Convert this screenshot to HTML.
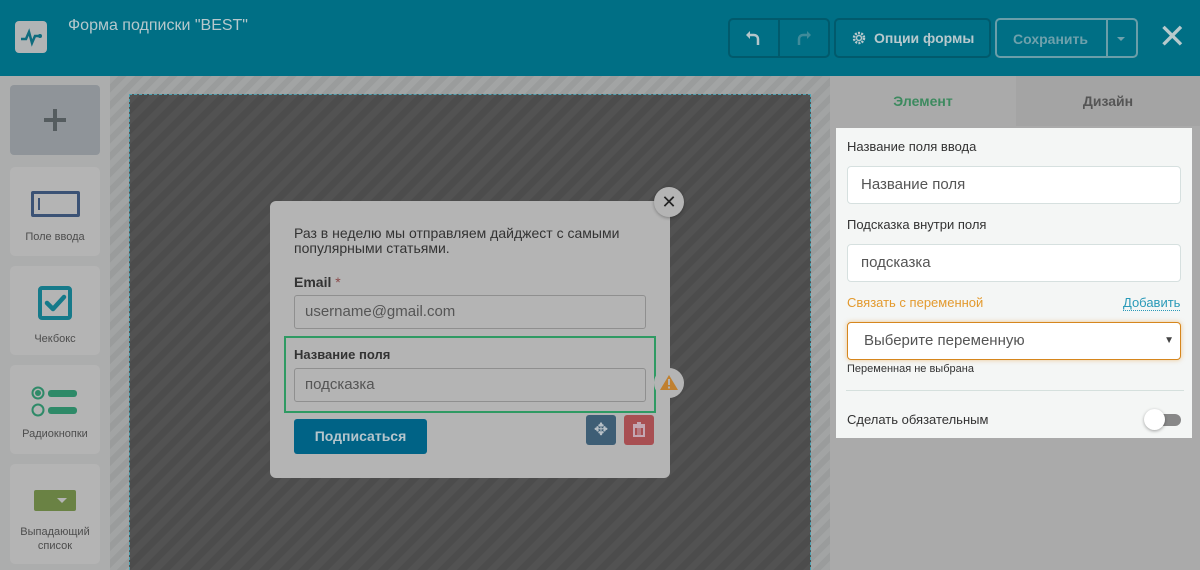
<!DOCTYPE html>
<html><head><meta charset="utf-8"><style>
*{box-sizing:border-box;margin:0;padding:0}
html,body{width:1200px;height:570px;overflow:hidden}
body{position:relative;font-family:"Liberation Sans","DejaVu Sans",sans-serif;background:#aaa}
.a{position:absolute}
.hdr{left:0;top:0;width:1200px;height:76px;background:#006f85}
.btn{border:2px solid #015a6c;border-radius:5px;height:40px;top:18px}
.side{left:0;top:76px;width:110px;height:494px;background:#acadad}
.card{left:10px;width:90px;background:#b4b4b4;border-radius:5px;text-align:center;font-size:11px;color:#4d4d4d}
.canvasbg{left:110px;top:76px;width:720px;height:494px;background:repeating-linear-gradient(135deg,#a2a4a4 0 6px,#9a9c9c 6px 12px)}
.canvas{left:129px;top:94px;width:682px;height:476px;border:1px dashed #4aa3b3;border-bottom:none;background:repeating-linear-gradient(135deg,#525252 0 7px,#4c4c4c 7px 14px)}
.pop{left:270px;top:201px;width:400px;height:277px;background:#b4b4b4;border-radius:6px}
.inp{border:1px solid #8f8f8f;border-radius:3px;background:#b4b4b4;font-size:15px;color:#555;padding-left:10px;line-height:32px}
.rp{left:830px;top:76px;width:370px;height:494px;background:#aaa}
.box{left:836px;top:128px;width:356px;height:310px;background:#f4f6f5}
.lbl{font-size:13px;color:#333}
.rin{left:847px;width:334px;height:38px;background:#fff;border:1px solid #d6e0df;border-radius:4px;font-size:15px;color:#555;padding-left:13px;line-height:36px}
</style></head><body>
<div class="a hdr"></div>
<div class="a" style="left:15px;top:21px;width:32px;height:32px;background:#b1b4b5;border-radius:4px"></div>
<svg class="a" style="left:15px;top:21px" width="32" height="32"><path d="M6 18h5l3-7 3 11 3-7h5" stroke="#0f6c7e" stroke-width="2.5" fill="none"/><circle cx="25" cy="15" r="2" fill="#0f6c7e"/></svg>
<div class="a" style="left:68px;top:17px;font-size:16px;color:#b6c8cc">Форма подписки "BEST"</div>
<div class="a btn" style="left:728px;width:102px"></div>
<div class="a" style="left:778px;top:20px;width:2px;height:36px;background:#015a6c"></div>
<svg class="a" style="left:745px;top:29px" width="18" height="18"><path d="M4 6h5a4 4 0 0 1 4 4v6" stroke="#b4c6ca" stroke-width="2.5" fill="none"/><path d="M1 6l4-4v8z" fill="#b4c6ca"/></svg>
<svg class="a" style="left:794px;top:29px" width="18" height="18"><path d="M14 6H9a4 4 0 0 0-4 4v6" stroke="#3f8b9a" stroke-width="2.5" fill="none"/><path d="M17 6l-4-4v8z" fill="#3f8b9a"/></svg>
<div class="a btn" style="left:834px;width:157px;color:#b8c9cd;font-weight:bold;font-size:14px;line-height:36px;padding-left:38px">Опции формы</div>
<svg class="a" style="left:852px;top:31px" width="14" height="14"><circle cx="7" cy="7" r="5" stroke="#b8c9cd" stroke-width="2.5" fill="none" stroke-dasharray="2 1.2"/><circle cx="7" cy="7" r="2.5" stroke="#b8c9cd" stroke-width="1.5" fill="none"/></svg>
<div class="a btn" style="left:995px;width:143px;border-color:#6a9ea9"></div>
<div class="a" style="left:1106px;top:20px;width:2px;height:36px;background:#6a9ea9"></div>
<div class="a" style="left:1013px;top:31px;font-size:14px;font-weight:bold;color:#6ea1ac">Сохранить</div>
<div class="a" style="left:1117px;top:37px;border:4px solid transparent;border-top-color:#6ea1ac"></div>
<div class="a" style="left:1158px;top:17px;font-size:34px;color:#b7c9cc;line-height:40px">✕</div>

<div class="a side"></div>
<div class="a" style="left:10px;top:85px;width:90px;height:70px;background:#8f9499;border-radius:4px"></div>
<div class="a" style="left:44px;top:118px;width:22px;height:4px;background:#555c5f"></div>
<div class="a" style="left:53px;top:109px;width:4px;height:22px;background:#555c5f"></div>
<div class="a card" style="top:167px;height:89px"><div style="margin:24px auto 0;width:49px;height:26px;border:3px solid #3b5275;border-radius:2px;position:relative"><div style="position:absolute;left:4px;top:4px;width:2px;height:12px;background:#3b5275"></div></div><div style="margin-top:14px">Поле ввода</div></div>
<div class="a card" style="top:266px;height:89px"><svg style="margin-top:20px" width="34" height="34"><rect x="2" y="2" width="30" height="30" rx="2" stroke="#167a8a" stroke-width="4" fill="none"/><path d="M9 17l6 6 11-12" stroke="#167a8a" stroke-width="4.5" fill="none" stroke-linecap="round" stroke-linejoin="round"/></svg><div style="margin-top:10px">Чекбокс</div></div>
<div class="a card" style="top:365px;height:89px"><svg style="margin-top:20px" width="50" height="34"><circle cx="8" cy="8" r="5.5" stroke="#2e8a68" stroke-width="2" fill="none"/><circle cx="8" cy="8" r="3" fill="#2e8a68"/><rect x="18" y="5" width="29" height="7" rx="3" fill="#2e8a68"/><circle cx="8" cy="25" r="5.5" stroke="#2e8a68" stroke-width="2" fill="none"/><rect x="18" y="22" width="29" height="7" rx="3" fill="#2e8a68"/></svg><div style="margin-top:6px">Радиокнопки</div></div>
<div class="a card" style="top:464px;height:100px"><div style="margin:26px auto 0;width:42px;height:21px;background:#6a8244;border-radius:2px;position:relative"><div style="position:absolute;right:9px;top:8px;border:5px solid transparent;border-top-color:#b4b4b4"></div></div><div style="margin-top:14px;line-height:14px">Выпадающий<br>список</div></div>

<div class="a canvasbg"></div>
<div class="a canvas"></div>
<div class="a pop"></div>
<div class="a" style="left:294px;top:226px;font-size:14px;color:#333;line-height:15px">Раз в неделю мы отправляем дайджест с самыми<br>популярными статьями.</div>
<div class="a" style="left:294px;top:274px;font-size:14px;font-weight:bold;color:#333">Email <span style="color:#8b4a4a;font-weight:normal">*</span></div>
<div class="a inp" style="left:294px;top:295px;width:352px;height:34px">username@gmail.com</div>
<div class="a" style="left:284px;top:336px;width:372px;height:77px;border:2px solid #2f9a63"></div>
<div class="a" style="left:294px;top:347px;font-size:13px;font-weight:bold;color:#333">Название поля</div>
<div class="a inp" style="left:294px;top:368px;width:352px;height:34px">подсказка</div>
<div class="a" style="left:294px;top:419px;width:133px;height:35px;background:#006386;border-radius:3px;color:#b5c5cc;font-weight:bold;font-size:14px;text-align:center;line-height:35px">Подписаться</div>
<div class="a" style="left:586px;top:415px;width:30px;height:30px;background:#3e5e75;border-radius:3px;color:#b7c0c6;text-align:center;line-height:30px;font-size:17px">✥</div>
<div class="a" style="left:624px;top:415px;width:30px;height:30px;background:#a84f52;border-radius:3px"></div>
<svg class="a" style="left:624px;top:415px" width="30" height="30"><rect x="9" y="9" width="12" height="2" fill="#c3a7b3"/><rect x="13" y="7" width="4" height="2" fill="#c3a7b3"/><path d="M10 12h10v9h-10z" fill="none" stroke="#c3a7b3" stroke-width="2"/><path d="M14 13v7M16 13v7" stroke="#c3a7b3"/></svg>
<div class="a" style="left:654px;top:187px;width:30px;height:30px;border-radius:50%;background:#b4b4b4;box-shadow:0 1px 3px rgba(0,0,0,.3);text-align:center;line-height:30px;font-size:18px;color:#222">✕</div>
<div class="a" style="left:654px;top:368px;width:30px;height:30px;border-radius:50%;background:#b4b4b4"></div>
<svg class="a" style="left:654px;top:368px" width="30" height="30"><path d="M15 7L24 22H6Z" fill="#c0802f"/><rect x="14" y="11" width="2" height="6" fill="#b4b4b4"/><rect x="14" y="18.5" width="2" height="2" fill="#b4b4b4"/></svg>

<div class="a rp"></div>
<div class="a" style="left:1016px;top:76px;width:184px;height:50px;background:#a4a4a4"></div>
<div class="a" style="left:830px;top:93px;width:186px;text-align:center;font-size:14px;font-weight:bold;color:#3d8a5f">Элемент</div>
<div class="a" style="left:1016px;top:93px;width:184px;text-align:center;font-size:14px;font-weight:bold;color:#555">Дизайн</div>
<div class="a box"></div>
<div class="a lbl" style="left:847px;top:139px">Название поля ввода</div>
<div class="a rin" style="top:166px">Название поля</div>
<div class="a lbl" style="left:847px;top:217px">Подсказка внутри поля</div>
<div class="a rin" style="top:244px">подсказка</div>
<div class="a" style="left:847px;top:295px;font-size:13px;color:#e39a2e">Связать с переменной</div>
<div class="a" style="left:1123px;top:295px;font-size:13px;color:#2a9ab8;border-bottom:1px dotted #2a9ab8">Добавить</div>
<div class="a rin" style="top:322px;border-color:#d6861d;box-shadow:0 0 5px rgba(230,150,40,.5);padding-left:16px">Выберите переменную<span style="position:absolute;right:6px;font-size:10px;color:#444">▼</span></div>
<div class="a" style="left:847px;top:363px;font-size:11px;color:#333">Переменная не выбрана</div>
<div class="a" style="left:846px;top:390px;width:338px;height:1px;background:#d5e0dd"></div>
<div class="a lbl" style="left:847px;top:412px">Сделать обязательным</div>
<div class="a" style="left:1146px;top:414px;width:35px;height:12px;border-radius:6px;background:#888"></div>
<div class="a" style="left:1144px;top:409px;width:21px;height:21px;border-radius:50%;background:#fff;box-shadow:0 1px 3px rgba(0,0,0,.35)"></div>
</body></html>
